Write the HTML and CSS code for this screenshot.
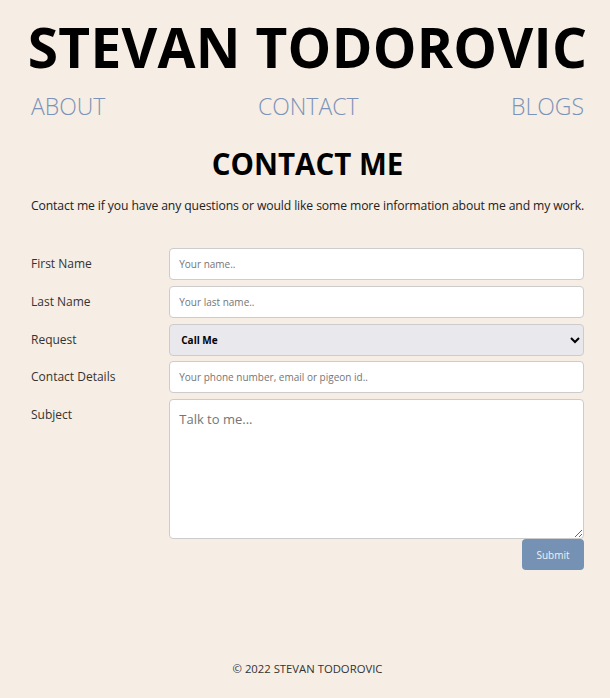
FILE: index.html
```html
<!DOCTYPE html>
<html lang="en">
<head>
<meta charset="utf-8">
<title>Contact - Stevan Todorovic</title>
<link rel="stylesheet" href="styles.css">
</head>
<body>
<div class="page">
  <header class="site-header">
    <h1 class="site-title">STEVAN TODOROVIC</h1>
    <nav class="site-nav">
      <a href="#" class="nav-link">ABOUT</a>
      <a href="#" class="nav-link">CONTACT</a>
      <a href="#" class="nav-link">BLOGS</a>
    </nav>
  </header>
  <main class="contact">
    <h2 class="contact-title">CONTACT ME</h2>
    <p class="contact-intro">Contact me if you have any questions or would like some more information about me and my work.</p>
    <form class="contact-form">
      <div class="form-row">
        <label class="form-label" for="fname">First Name</label>
        <input class="form-input" id="fname" type="text" placeholder="Your name..">
      </div>
      <div class="form-row">
        <label class="form-label" for="lname">Last Name</label>
        <input class="form-input" id="lname" type="text" placeholder="Your last name..">
      </div>
      <div class="form-row">
        <label class="form-label" for="request">Request</label>
        <select class="form-input form-select" id="request">
          <option>Call Me</option>
          <option>Email Me</option>
        </select>
      </div>
      <div class="form-row">
        <label class="form-label" for="details">Contact Details</label>
        <input class="form-input" id="details" type="text" placeholder="Your phone number, email or pigeon id..">
      </div>
      <div class="form-row">
        <label class="form-label" for="subject">Subject</label>
        <textarea class="form-input form-textarea" id="subject" placeholder="Talk to me..."></textarea>
      </div>
      <div class="form-actions">
        <button type="submit" class="submit-btn">Submit</button>
      </div>
    </form>
  </main>
  <footer class="site-footer">© 2022 STEVAN TODOROVIC</footer>
</div>
</body>
</html>
```

FILE: styles.css
```css
html, body {
  margin: 0;
  padding: 0;
  background: #f6ede4;
}

body {
  font-family: "Open Sans", "Liberation Sans", sans-serif;
  color: #222;
}

.page {
  padding: 0 26px 0 31px;
}

.site-title {
  margin: 19px -10px 0;
  font-size: 55px;
  line-height: 55px;
  font-weight: 700;
  color: #000;
  text-align: center;
  letter-spacing: 0.3px;
  white-space: nowrap;
}

.site-nav {
  margin-top: 21px;
  display: flex;
  justify-content: space-between;
}

.nav-link {
  font-size: 23px;
  line-height: 23px;
  font-weight: 300;
  color: #7b93b8;
  text-decoration: none;
}

.contact-title {
  margin: 31px 0 0;
  font-size: 29.5px;
  line-height: 30px;
  font-weight: 700;
  color: #000;
  text-align: center;
}

.contact-intro {
  margin: 17px -10px 0;
  font-size: 12.2px;
  letter-spacing: -0.12px;
  line-height: 19.5px;
  text-align: center;
  color: #222;
  white-space: nowrap;
}

.contact-form {
  margin-top: 32.5px;
  display: flex;
  flex-direction: column;
  gap: 5.75px;
}

.form-row {
  display: flex;
}

.form-label {
  width: 25%;
  flex: none;
  font-size: 12px;
  line-height: 32px;
  color: #333;
}

.form-input {
  flex: 1;
  box-sizing: border-box;
  height: 32px;
  margin: 0;
  padding: 0 9px;
  border: 1px solid #ccc;
  border-radius: 4px;
  background: #fff;
  font-family: "Open Sans", "Liberation Sans", sans-serif;
  font-size: 10px;
  color: #222;
}

.form-input::placeholder {
  color: #757575;
}

.form-select {
  background-color: #e9e8ed;
  font-weight: 700;
  color: #000;
  padding-left: 7px;
}

.form-textarea {
  display: block;
  height: 140px;
  padding: 10px 9px;
  font-size: 13px;
  resize: vertical;
}

.form-actions {
  display: flex;
  justify-content: flex-end;
  margin-top: -5.75px;
}

.submit-btn {
  width: 62px;
  height: 31px;
  border: none;
  border-radius: 4px;
  background: #7591b3;
  color: #eef2f7;
  font-family: "Open Sans", "Liberation Sans", sans-serif;
  font-size: 10px;
}

.site-footer {
  margin-top: 90px;
  padding-bottom: 20px;
  font-size: 11.3px;
  line-height: 18px;
  text-align: center;
  color: #333;
}
```
